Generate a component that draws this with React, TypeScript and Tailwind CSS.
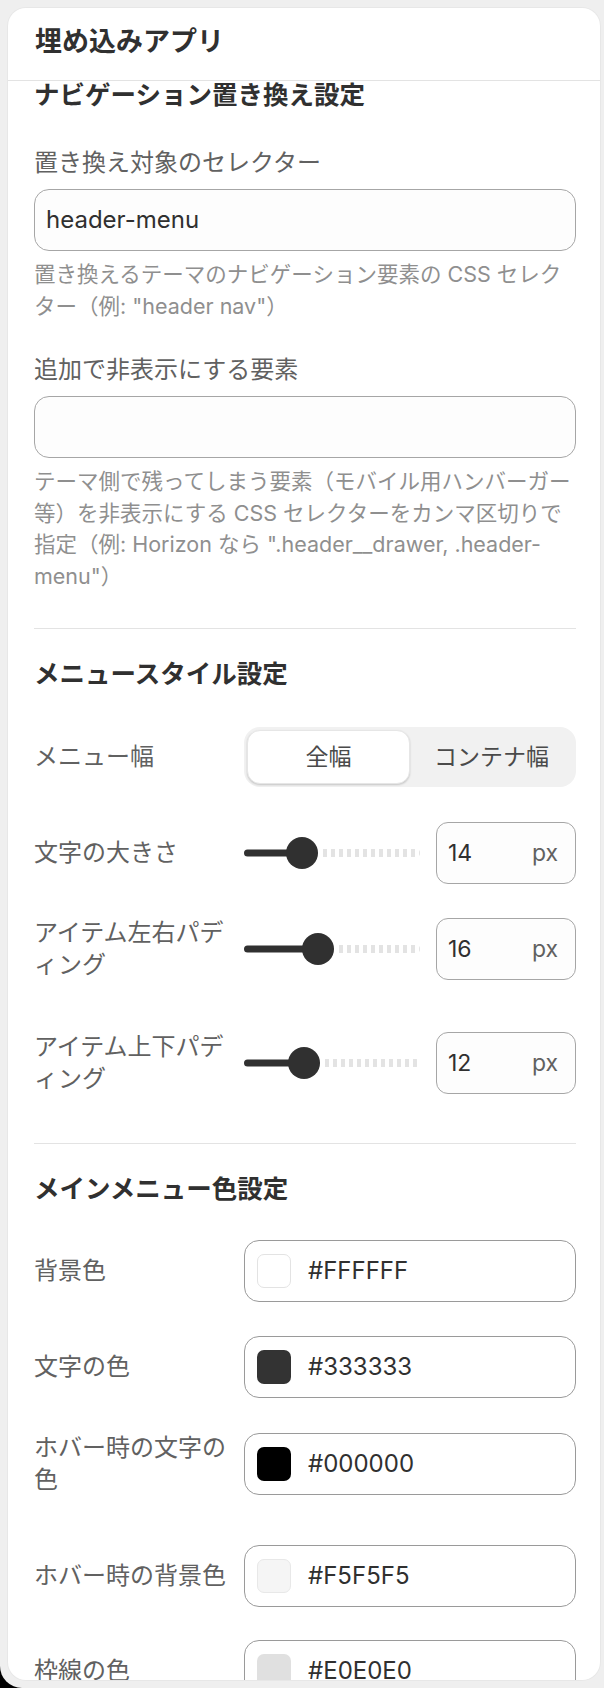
const sliderRows = [
    { label: "文字の大きさ", value: 14, thumb: 58, mt: "mt-[35px]" },
    { label: "アイテム左右パディング", value: 16, thumb: 74, mt: "mt-[33px]" },
    { label: "アイテム上下パディング", value: 12, thumb: 60, mt: "mt-[50px]" },
]

const colorRows = [
    { label: "背景色", hex: "#FFFFFF", swatch: "bg-[#ffffff] border border-[#e3e3e3]", mt: "mt-[37px]" },
    { label: "文字の色", hex: "#333333", swatch: "bg-[#333333]", mt: "mt-[34px]" },
    { label: "ホバー時の文字の色", hex: "#000000", swatch: "bg-[#000000]", mt: "mt-[34px]" },
    { label: "ホバー時の背景色", hex: "#F5F5F5", swatch: "bg-[#f5f5f5] border border-[#e8e8e8]", mt: "mt-[49px]" },
    { label: "枠線の色", hex: "#E0E0E0", swatch: "bg-[#e0e0e0]", mt: "mt-[33px]" },
]

const Label = ({ children }: { children: React.ReactNode }) => (
    <div className="text-[24px] leading-[32px] text-[#616161]">{children}</div>
)

const Slider = ({ thumb }: { thumb: number }) => (
    <div className="relative h-[32px] flex-1">
        <div className="absolute left-0 top-1/2 h-[7px] -translate-y-1/2 rounded-full bg-[#303030]" style={{ width: thumb }} />
        <div
            className="absolute right-0 top-1/2 h-[8px] -translate-y-1/2 rounded-r-full bg-[repeating-linear-gradient(90deg,#e3e3e3_0px,#e3e3e3_4px,transparent_4px,transparent_8px)]"
            style={{ left: thumb + 21 }}
        />
        <div className="absolute top-0 h-[32px] w-[32px] -translate-x-1/2 rounded-full bg-[#303030]" style={{ left: thumb }} />
    </div>
)

export default function App() {
    return (
        <div className="h-[1688px] w-[604px] bg-black font-['Inter','Noto_Sans_CJK_JP',sans-serif]">
            <div className="flex h-full flex-col rounded-bl-[22px] bg-[#efefef] pb-[8px] pl-[8px] pr-[4px] pt-[8px]">
                <div className="flex flex-1 flex-col overflow-hidden rounded-[18px] bg-white shadow-[0_0_0_1px_rgba(0,0,0,0.03)]">
                    <div className="flex h-[73px] shrink-0 items-center border-b border-[#e3e3e3] px-[27px] pb-[3px] text-[27px] font-bold text-[#303030]">
                        埋め込みアプリ
                    </div>

                    <div className="flex-1 pl-[26px] pr-[24px]">
                        <div className="-mt-[4px] text-[25.5px] font-bold leading-[36px] text-[#303030]">ナビゲーション置き換え設定</div>

                        <div className="mt-[34px]">
                            <Label>置き換え対象のセレクター</Label>
                        </div>
                        <div className="mt-[10px] flex h-[62px] items-center rounded-[15px] border border-[#a6a6a6] bg-[#fdfdfd] pl-[11px] text-[24px] text-[#303030]">
                            header-menu
                        </div>
                        <p className="mt-[8px] text-[21.5px] leading-[31.5px] text-[#8f8f8f]">
                            置き換えるテーマのナビゲーション要素の CSS セレクター（例: "header nav"）
                        </p>

                        <div className="mt-[32px]">
                            <Label>追加で非表示にする要素</Label>
                        </div>
                        <div className="mt-[10px] h-[62px] rounded-[15px] border border-[#a6a6a6] bg-[#fdfdfd]" />
                        <p className="mt-[8px] text-[21.5px] leading-[31.5px] text-[#8f8f8f]">
                            テーマ側で残ってしまう要素（モバイル用ハンバーガー等）を非表示にする CSS セレクターをカンマ区切りで指定（例: Horizon なら ".header__drawer, .header-menu"）
                        </p>

                        <div className="mt-[36px] border-t border-[#e3e3e3]" />

                        <div className="mt-[31px] text-[25.5px] font-bold leading-[28px] text-[#303030]">メニュースタイル設定</div>

                        <div className="mt-[39px] grid grid-cols-[196px_1fr] items-center gap-x-[14px]">
                            <Label>メニュー幅</Label>
                            <div className="grid h-[60px] grid-cols-2 rounded-[16px] bg-[#f1f1f1] p-[3px] text-[23px] text-[#4a4a4a]">
                                <div className="flex items-center justify-center rounded-[13px] border border-[#e6e6e6] bg-white shadow-[0_1px_2px_rgba(0,0,0,0.18)]">
                                    全幅
                                </div>
                                <div className="flex items-center justify-center">コンテナ幅</div>
                            </div>
                        </div>

                        {sliderRows.map((row) => (
                            <div key={row.label} className={`${row.mt} grid grid-cols-[196px_1fr] items-center gap-x-[14px]`}>
                                <Label>{row.label}</Label>
                                <div className="flex items-center gap-[16px]">
                                    <Slider thumb={row.thumb} />
                                    <div className="flex h-[62px] w-[140px] items-center justify-between rounded-[12px] border border-[#a6a6a6] bg-[#fdfdfd] pl-[11px] pr-[17px] text-[23px]">
                                        <span className="text-[#303030]">{row.value}</span>
                                        <span className="text-[#616161]">px</span>
                                    </div>
                                </div>
                            </div>
                        ))}

                        <div className="mt-[48px] border-t border-[#e3e3e3]" />

                        <div className="mt-[31px] text-[25.5px] font-bold leading-[28px] text-[#303030]">メインメニュー色設定</div>

                        {colorRows.map((row) => (
                            <div key={row.label} className={`${row.mt} grid grid-cols-[196px_1fr] items-center gap-x-[14px]`}>
                                <Label>{row.label}</Label>
                                <div className="flex h-[62px] items-center gap-[17px] rounded-[15px] border border-[#9a9a9a] bg-white pl-[12px] text-[24px] text-[#303030]">
                                    <span className={`h-[34px] w-[34px] rounded-[7px] ${row.swatch}`} />
                                    {row.hex}
                                </div>
                            </div>
                        ))}
                    </div>
                </div>
            </div>
        </div>
    )
}
